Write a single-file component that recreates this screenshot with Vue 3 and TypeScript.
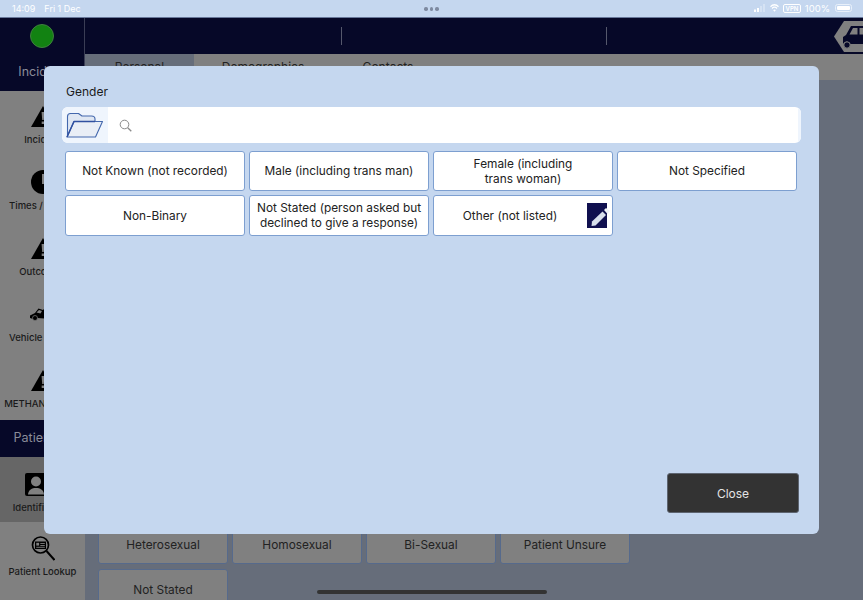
<script setup lang="ts">
const navItems = [
  { label: 'Incident', icon: 'warn' },
  { label: 'Times / Events', icon: 'clock' },
  { label: 'Outcomes', icon: 'warn' },
  { label: 'Vehicle Details', icon: 'truck' },
  { label: 'METHANE Notes', icon: 'warn' },
]
const tabs = ['Personal', 'Demographics', 'Contacts']
const backButtons = ['Heterosexual', 'Homosexual', 'Bi-Sexual', 'Patient Unsure', 'Not Stated']
const options = [
  { label: 'Not Known (not recorded)' },
  { label: 'Male (including trans man)' },
  { label: 'Female (including\ntrans woman)' },
  { label: 'Not Specified' },
  { label: 'Non-Binary' },
  { label: 'Not Stated (person asked but\ndeclined to give a response)' },
  { label: 'Other (not listed)', edit: true },
]
</script>

<template>
  <div class="page">
    <div class="status">
      <span class="time">14:09</span><span class="date">Fri 1 Dec</span>
      <div class="dots"><i></i><i></i><i></i></div>
      <div class="status-right">
        <svg class="signal" width="12" height="8" viewBox="0 0 12 8">
          <rect x="0" y="5.500" width="2" height="2.500" fill="#fff" />
          <rect x="3" y="4" width="2" height="4" fill="#fff" />
          <rect x="6" y="2" width="2" height="6" fill="#fff" opacity=".3" />
          <rect x="9" y="0" width="2" height="8" fill="#fff" opacity=".3" />
        </svg>
        <svg width="9" height="8" viewBox="0 0 11 8" preserveAspectRatio="none" fill="none" stroke="#fff" stroke-width="1.400">
          <path d="M.6 2.800a7 7 0 0 1 9.800 0" />
          <path d="M2.400 4.600a4.400 4.400 0 0 1 6.200 0" />
          <path d="M5.500 7.800 3.900 6.200a2.300 2.300 0 0 1 3.200 0z" fill="#fff" stroke="none" />
        </svg>
        <span class="vpn">VPN</span>
        <span class="pct">100%</span>
        <span class="battery"><b></b></span>
      </div>
    </div>

    <header class="topbar">
      <div class="top-left"><span class="led"></span></div>
      <div class="top-cell"></div>
      <div class="top-cell"></div>
      <div class="top-cell last">
        <svg class="car" width="30" height="33" viewBox="0 0 30 33">
          <path d="M30 1H11L1 16.500L11 32H30z" fill="#808080" />
          <path d="M10 24V17L13 15 18 6H30V24H17.500a4 4 0 0 0-7.500 0z" fill="#060828" />
          <path d="M20 8h4.500v6.500H16.500zM26.500 8H30v6.500H26.500z" fill="#808080" />
          <circle cx="14" cy="25" r="3.200" fill="#060828" stroke="#808080" stroke-width="1" />
        </svg>
      </div>
    </header>

    <div class="body">
      <aside class="side">
        <div class="section">Incident</div>
        <div v-for="n in navItems" :key="n.label" class="nav">
          <svg v-if="n.icon === 'warn'" width="24" height="22" viewBox="0 0 24 22">
            <path d="M12 0 24 21H0z" fill="#000" />
            <path d="M10.600 6h2.800l-.6 8h-1.600zM10.700 15.500h2.600v2.500h-2.600z" fill="#808080" />
          </svg>
          <svg v-else-if="n.icon === 'clock'" width="24" height="24" viewBox="0 0 24 24">
            <circle cx="12" cy="12" r="12" fill="#000" />
            <path d="M11 4h2v8h5v2h-7z" fill="#808080" />
          </svg>
          <svg v-else class="truck" width="26" height="15" viewBox="0 0 26 15">
            <path d="M0 9.500 5 7 8.500 2.500 13 4 17 0 25 3 22 13 7 12 3 13 0 12z" fill="#000" />
            <path d="M6.500 6.500 9 4l3 1-1.500 2.500z" fill="#808080" />
            <circle cx="5" cy="12" r="2.500" fill="#000" stroke="#808080" stroke-width=".7" />
            <path d="M15 9v6M20 8v7" stroke="#000" stroke-width="1" />
          </svg>
          <span>{{ n.label }}</span>
        </div>
        <div class="section patient">Patient ID</div>
        <div class="nav current">
          <svg class="id-icon" width="22" height="23" viewBox="0 0 22 23">
            <rect x="0" y="0" width="22" height="23" rx="2" fill="#000" />
            <circle cx="11" cy="8.500" r="5" fill="#808080" />
            <path d="M3 21.500C3.500 16.500 7 15 11 15s7.500 1.500 8 6.500z" fill="#808080" />
          </svg>
          <span>Identification</span>
        </div>
        <div class="nav lookup">
          <svg width="24" height="25" viewBox="0 0 24 25" fill="none">
            <circle cx="9.500" cy="9" r="8" stroke="#000" stroke-width="1.700" />
            <path d="M15.500 15 23.500 24" stroke="#000" stroke-width="2" />
            <rect x="4" y="5.500" width="11" height="7.500" fill="#000" />
            <rect x="5.300" y="6.800" width="2.800" height="2.800" fill="#808080" />
            <path d="M9.300 7.500h4.500M9.300 9.500h4.500M5.300 11.300h8.500" stroke="#808080" stroke-width=".9" />
          </svg>
          <span>Patient Lookup</span>
        </div>
      </aside>

      <main class="main">
        <nav class="tabs">
          <div v-for="t in tabs" :key="t" class="tab">{{ t }}</div>
        </nav>
        <div class="form">
          <div v-for="b in backButtons" :key="b" class="back-btn">{{ b }}</div>
        </div>
      </main>
    </div>

    <div class="home"></div>

    <section class="modal">
      <h2 class="title">Gender</h2>
      <div class="search">
        <div class="folder">
          <svg width="38" height="26" viewBox="0 0 38 26" fill="none" stroke="#4468ad" stroke-width="1.100" stroke-linejoin="round">
            <path d="M1.500 23V4.500Q1.500 1.500 4.500 1.500H12.500L16 4H25.500Q29 4 29 7V9" fill="#dfe7f3" />
            <path d="M1 25 8 9.500H36.500L29.500 25z" fill="#e9eef6" />
            <path d="M1 25 8 9.500H29" stroke="#3050a0" stroke-width="1.500" />
          </svg>
        </div>
        <svg class="glass" width="13" height="13" viewBox="0 0 13 13" fill="none" stroke="#8a8a8a" stroke-width="1">
          <circle cx="5.500" cy="5.500" r="4.300" />
          <path d="M8.700 8.700 12.300 12.300" stroke-width="1.300" />
        </svg>
        <div class="search-end"></div>
      </div>
      <div class="options">
        <button v-for="o in options" :key="o.label" class="option" :class="{ editable: o.edit }" type="button">
          <span class="option-text">{{ o.label }}</span>
          <span v-if="o.edit" class="edit">
            <svg width="20" height="25" viewBox="0 0 20 25">
              <path d="M4.500 23 5 18.500 15.500 8.500 19 12 8.500 22.500z" fill="#d8dfec" />
              <path d="M17 7l2-2 4 3-2.500 3z" fill="#eef1f6" />
            </svg>
          </span>
        </button>
      </div>
      <div class="actions">
        <button class="close" type="button">Close</button>
      </div>
    </section>
  </div>
</template>

<style>
html, body { margin: 0; background: #666d7a; }
</style>

<style scoped>
* { box-sizing: border-box; }
.page {
  position: relative;
  width: 863px;
  height: 600px;
  overflow: hidden;
  display: flex;
  flex-direction: column;
  font-family: Inter, "Liberation Sans", sans-serif;
  color: #222;
}
.status {
  position: relative;
  height: 18px;
  flex: none;
  display: flex;
  align-items: center;
  padding: 0 11px 1px 12px;
  background: #c5d7ef;
  border-bottom: 1px solid #68789a;
  color: #fff;
  font-size: 9px;
}
.date { margin-left: 9px; }
.dots {
  position: absolute;
  left: 424px;
  top: 7px;
  display: flex;
  gap: 2px;
}
.dots i { width: 3.500px; height: 3.500px; border-radius: 50%; background: #7e8aa0; }
.status-right {
  margin-left: auto;
  display: flex;
  align-items: center;
  gap: 4px;
}
.vpn {
  font-size: 6px;
  font-weight: 600;
  line-height: 7px;
  padding: 0 1.500px;
  border: 1px solid #fff;
  border-radius: 2px;
}
.pct { font-size: 9.500px; }
.battery {
  width: 17px;
  height: 8px;
  padding: 1px;
  margin-left: 1px;
  border: 1px solid #e8f0fa;
  border-radius: 2.500px;
  display: flex;
}
.battery b { flex: 1; background: #fff; border-radius: 1px; }
.topbar {
  height: 36px;
  flex: none;
  display: flex;
  background: #060828;
}
.top-left {
  width: 85px;
  flex: none;
  display: flex;
  align-items: center;
  justify-content: center;
  border-right: 1px solid #3a3d55;
}
.led {
  width: 24px;
  height: 24px;
  border-radius: 50%;
  background: #128212;
  border: 1px solid #3f7f3f;
}
.top-cell {
  position: relative;
  width: 265px;
  flex: none;
}
.top-cell:not(.last)::after {
  content: "";
  position: absolute;
  right: 8px;
  top: 9px;
  height: 18px;
  width: 1px;
  background: #55586c;
}
.top-cell.last {
  flex: 1;
  display: flex;
  justify-content: flex-end;
  align-items: center;
}
.body {
  flex: 1;
  min-height: 0;
  display: flex;
}
.side {
  width: 85px;
  flex: none;
  display: flex;
  flex-direction: column;
  background: #808080;
}
.section {
  height: 37px;
  flex: none;
  display: flex;
  align-items: center;
  justify-content: center;
  padding-bottom: 3px;
  background: #060828;
  color: #8a8c99;
  font-size: 12.500px;
  white-space: nowrap;
  border-right: 1px solid #3a3d55;
}
.section.patient { margin-top: -1px; }
.nav {
  height: 66px;
  flex: none;
  display: flex;
  flex-direction: column;
  align-items: center;
  justify-content: flex-end;
  gap: 6px;
  padding-bottom: 12px;
  font-size: 9.500px;
  font-weight: 500;
  color: #1a1a1a;
  white-space: nowrap;
}
.truck { margin-bottom: 5px; }
.nav.current { background: #666; height: 65px; padding-bottom: 9px; gap: 6px; }
.id-icon { margin-right: 14px; }
.nav.lookup { height: 78px; justify-content: flex-start; padding: 14px 0 0; gap: 5px; }
.main {
  flex: 1;
  min-width: 0;
  display: flex;
  flex-direction: column;
  background: #666d7a;
}
.tabs {
  height: 26px;
  flex: none;
  display: flex;
  background: #808080;
}
.tab {
  padding-top: 5px;
  text-align: center;
  font-size: 12px;
  color: #222;
}
.tab:nth-child(1) { width: 109px; background: #666d7a; }
.tab:nth-child(2) { width: 138px; }
.tab:nth-child(3) { width: 112px; }
.form {
  display: grid;
  grid-template-columns: repeat(4, 130px);
  gap: 5px 4px;
  padding: 444px 0 0 13px;
}
.back-btn {
  height: 40px;
  padding-top: 1px;
  display: flex;
  align-items: center;
  justify-content: center;
  background: #808080;
  border: 1px solid #566a8c;
  border-radius: 3px;
  font-size: 11.850px;
  color: #222;
}
.home {
  position: absolute;
  left: 317px;
  top: 590px;
  width: 230px;
  height: 4px;
  border-radius: 2px;
  background: #333;
}
.modal {
  position: absolute;
  left: 44px;
  top: 66px;
  width: 775px;
  height: 468px;
  display: flex;
  flex-direction: column;
  padding: 18px 18px 21px;
  background: #c5d7ef;
  border-radius: 6px;
}
.title {
  margin: 0 0 8px 4px;
  font-size: 12px;
  line-height: 15px;
  font-weight: 400;
  color: #1a1a1a;
}
.search {
  height: 36px;
  display: flex;
  align-items: center;
  background: #fff;
  border-radius: 6px;
  overflow: hidden;
}
.folder {
  width: 46px;
  height: 100%;
  flex: none;
  display: flex;
  align-items: center;
  justify-content: center;
  background: #eff5fd;
}
.glass { margin-left: 11px; }
.search-end {
  margin-left: auto;
  width: 3px;
  height: 100%;
  background: #eff5fd;
}
.options {
  display: grid;
  grid-template-columns: repeat(4, 180px);
  grid-template-rows: 40px 41px;
  gap: 4px;
  margin: 8px 0 0 3px;
}
.option {
  position: relative;
  padding: 1px 4px 0;
  background: #fff;
  border: 1px solid #7d9fd0;
  border-radius: 3px;
  font-family: inherit;
  font-size: 11.850px;
  line-height: 15px;
  color: #222;
  display: flex;
  align-items: center;
  justify-content: center;
}
.option.editable { padding-right: 30px; }
.option-text { white-space: pre-line; text-align: center; }
.edit {
  position: absolute;
  right: 5px;
  top: 7px;
  width: 20px;
  height: 25px;
  background: #10104f;
}
.edit svg { display: block; overflow: visible; }
.actions {
  margin-top: auto;
  display: flex;
  justify-content: flex-end;
  padding-right: 2px;
}
.close {
  width: 132px;
  height: 40px;
  background: #333;
  border: 1px solid #5d6470;
  border-radius: 3px;
  font-family: inherit;
  font-size: 12px;
  color: #e4e4e4;
}
</style>
